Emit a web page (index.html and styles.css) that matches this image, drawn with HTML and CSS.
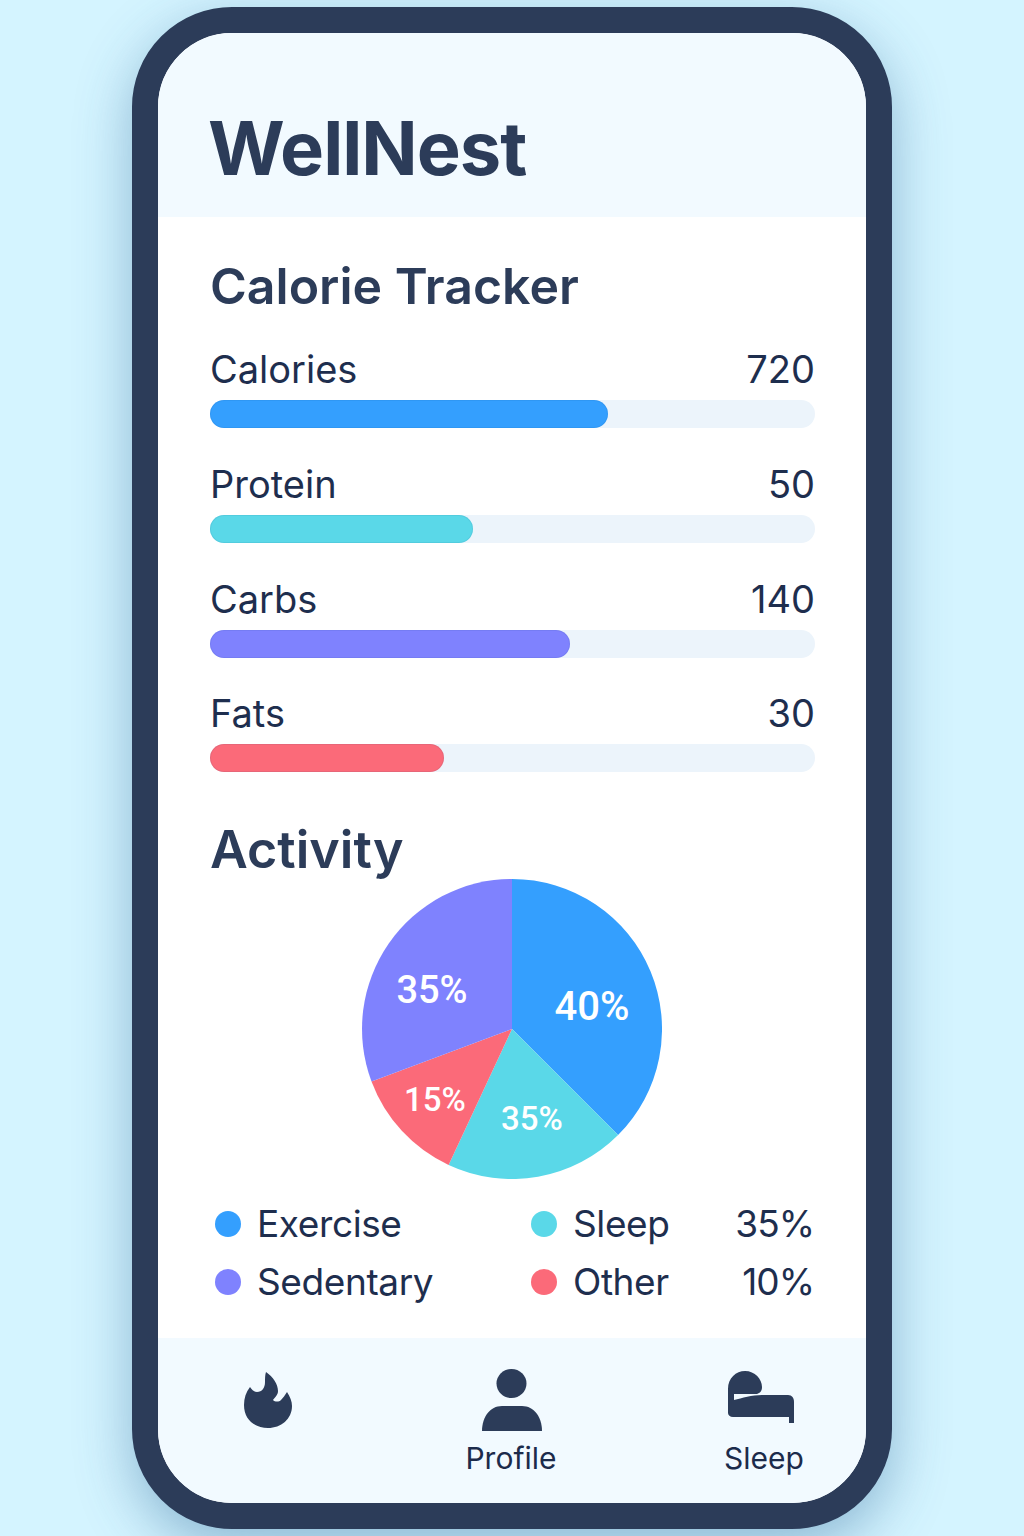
FILE: index.html
```html
<!DOCTYPE html>
<html lang="en">

<head>
    <meta charset="UTF-8">
    <meta name="viewport" content="width=device-width, initial-scale=1.0">
    <title>WellNest</title>
    <link rel="stylesheet" href="styles.css">
</head>

<body>
    <div class="phone">
        <header class="app-header">
            <h1>WellNest</h1>
        </header>

        <main class="content">
            <h2 class="tracker-title">Calorie Tracker</h2>

            <div class="metrics">
                <div class="metric">
                    <div class="metric-row"><span>Calories</span><span>720</span></div>
                    <div class="bar"><div class="bar-fill blue" style="width: 65.8%"></div></div>
                </div>
                <div class="metric">
                    <div class="metric-row"><span>Protein</span><span>50</span></div>
                    <div class="bar"><div class="bar-fill teal" style="width: 43.5%"></div></div>
                </div>
                <div class="metric">
                    <div class="metric-row"><span>Carbs</span><span>140</span></div>
                    <div class="bar"><div class="bar-fill purple" style="width: 59.5%"></div></div>
                </div>
                <div class="metric">
                    <div class="metric-row"><span>Fats</span><span>30</span></div>
                    <div class="bar"><div class="bar-fill red" style="width: 38.7%"></div></div>
                </div>
            </div>

            <h2 class="activity-title">Activity</h2>

            <svg class="pie" viewBox="0 0 300 300" width="300" height="300">
                <path d="M150 150 L150 0 A150 150 0 0 1 256.07 256.07 Z" fill="#349ffe" />
                <path d="M150 150 L256.07 256.07 A150 150 0 0 1 86.6 286 Z" fill="#5ad8e8" />
                <path d="M150 150 L86.6 286 A150 150 0 0 1 9.5 202.5 Z" fill="#fb6a79" />
                <path d="M150 150 L9.5 202.5 A150 150 0 0 1 150 0 Z" fill="#7f82fe" />
                <text class="pie-label" x="230" y="141" font-size="40">40%</text>
                <text class="pie-label" x="70" y="124" font-size="38">35%</text>
                <text class="pie-label" x="73" y="232" font-size="33">15%</text>
                <text class="pie-label" x="170" y="251" font-size="33">35%</text>
            </svg>

            <div class="legend">
                <div class="legend-item"><span class="dot blue"></span>Exercise</div>
                <div class="legend-item"><span class="dot teal"></span>Sleep</div>
                <div class="legend-pct">35%</div>
                <div class="legend-item"><span class="dot purple"></span>Sedentary</div>
                <div class="legend-item"><span class="dot red"></span>Other</div>
                <div class="legend-pct">10%</div>
            </div>
        </main>

        <nav class="tab-bar">
            <div class="tab">
                <svg class="flame-icon" viewBox="0 0 48 56" width="48" height="56">
                    <path d="M22 0 C29 5 34 12 34 19 C34 23 31 25 29 28 C31 30 35 30 37 28 C39 26 41 23 43 20 C46 25 48 29 48 34 C48 47 37 56 24 56 C10 56 0 47 0 33 C0 26 2 20 6 15 C8 18 10 20 13 20 C18 20 21 16 21 10 C21 6 21 3 22 0 Z" />
                </svg>
            </div>
            <div class="tab">
                <svg class="person-icon" viewBox="0 0 60 62" width="60" height="62">
                    <ellipse cx="29.5" cy="14.5" rx="15" ry="14.5" />
                    <path d="M0 62 C0 48 8 37 20 37 H40 C52 37 60 48 60 62 Z" />
                </svg>
                <span>Profile</span>
            </div>
            <div class="tab tab-sleep">
                <svg viewBox="0 0 66 52" width="66" height="52">
                    <path d="M0 42 V18 C0 7 8 0 17 0 C27 0 34 8 34 16 C34 20 32 22 29 23 H6 V29 C14 27 24 24 34 24 H60 C64 24 66 27 66 31 V52 H61 V46 H5 C2 46 0 44 0 42 Z" />
                </svg>
                <span>Sleep</span>
            </div>
        </nav>
    </div>
</body>

</html>
```

FILE: styles.css
```css
html,
body {
    margin: 0;
    padding: 0;
}

body {
    width: 1024px;
    height: 1536px;
    padding-top: 7px;
    box-sizing: border-box;
    overflow: hidden;
    font-family: Inter, "Liberation Sans", sans-serif;
    background: #d4f4ff;
    color: #1e2e4e;
}

.phone {
    width: 760px;
    height: 1522px;
    margin: 0 auto;
    box-sizing: border-box;
    border: 26px solid #2c3c59;
    border-radius: 100px;
    background: white;
    box-shadow: 0px 18px 55px rgba(40, 100, 150, 0.42);
    overflow: hidden;
    display: flex;
    flex-direction: column;
}

.app-header {
    height: 184px;
    box-sizing: border-box;
    padding: 71px 52px 0;
    background: #f2faff;
}

h1 {
    margin: 0 0 0 -2px;
    font-size: 74px;
    line-height: 88px;
    font-weight: 700;
    letter-spacing: -1px;
    color: #2c3c59;
}

.content {
    flex: 1;
    padding: 39px 51px 0 52px;
}

h2 {
    margin: 0;
    font-size: 50px;
    line-height: 60px;
    font-weight: 600;
    color: #2c3c59;
}

.metrics {
    margin-top: 30px;
    display: flex;
    flex-direction: column;
    gap: 32.8px;
}

.metric-row {
    display: flex;
    justify-content: space-between;
    font-size: 38px;
    line-height: 46px;
    margin-bottom: 8px;
}

.bar {
    height: 28px;
    border-radius: 14px;
    background: #ecf4fb;
}

.bar-fill {
    height: 100%;
    border-radius: 14px;
    box-shadow: inset 0 0 0 1px rgba(0, 60, 120, 0.08);
}

.blue {
    background: #349ffe;
}

.teal {
    background: #5ad8e8;
}

.purple {
    background: #7f82fe;
}

.red {
    background: #fb6a79;
}

.activity-title {
    margin-top: 47.6px;
    font-size: 52px;
    line-height: 59px;
}

.pie {
    display: block;
    margin-left: 152px;
}

.pie-label {
    fill: white;
    font-family: Roboto, sans-serif;
    font-weight: 500;
    text-anchor: middle;
}

.legend {
    margin-top: 22px;
    padding: 0 1px 0 5px;
    display: grid;
    grid-template-columns: 316px 1fr auto;
    row-gap: 12px;
    font-size: 37px;
    line-height: 46px;
    letter-spacing: -0.4px;
}

.legend-item {
    display: flex;
    align-items: center;
    gap: 16px;
}

.legend-pct {
    text-align: right;
    letter-spacing: -1px;
}

.dot {
    width: 26px;
    height: 26px;
    border-radius: 50%;
}

.tab-bar {
    height: 165px;
    box-sizing: border-box;
    padding-top: 31px;
    background: #f2faff;
    display: grid;
    grid-template-columns: 220px 266px 1fr;
}

.tab {
    display: flex;
    flex-direction: column;
    align-items: center;
    font-size: 30px;
    line-height: 36px;
    color: #1c2b4b;
}

.tab svg {
    display: block;
    fill: #2c3c59;
}

.tab span {
    margin-top: 9px;
}

.flame-icon {
    margin-top: 3px;
}

.person-icon {
    margin-left: 1px;
}

.tab-sleep {
    margin-left: 18px;
}

.tab-sleep svg {
    margin: 2px 6px 8px 0;
}
```
